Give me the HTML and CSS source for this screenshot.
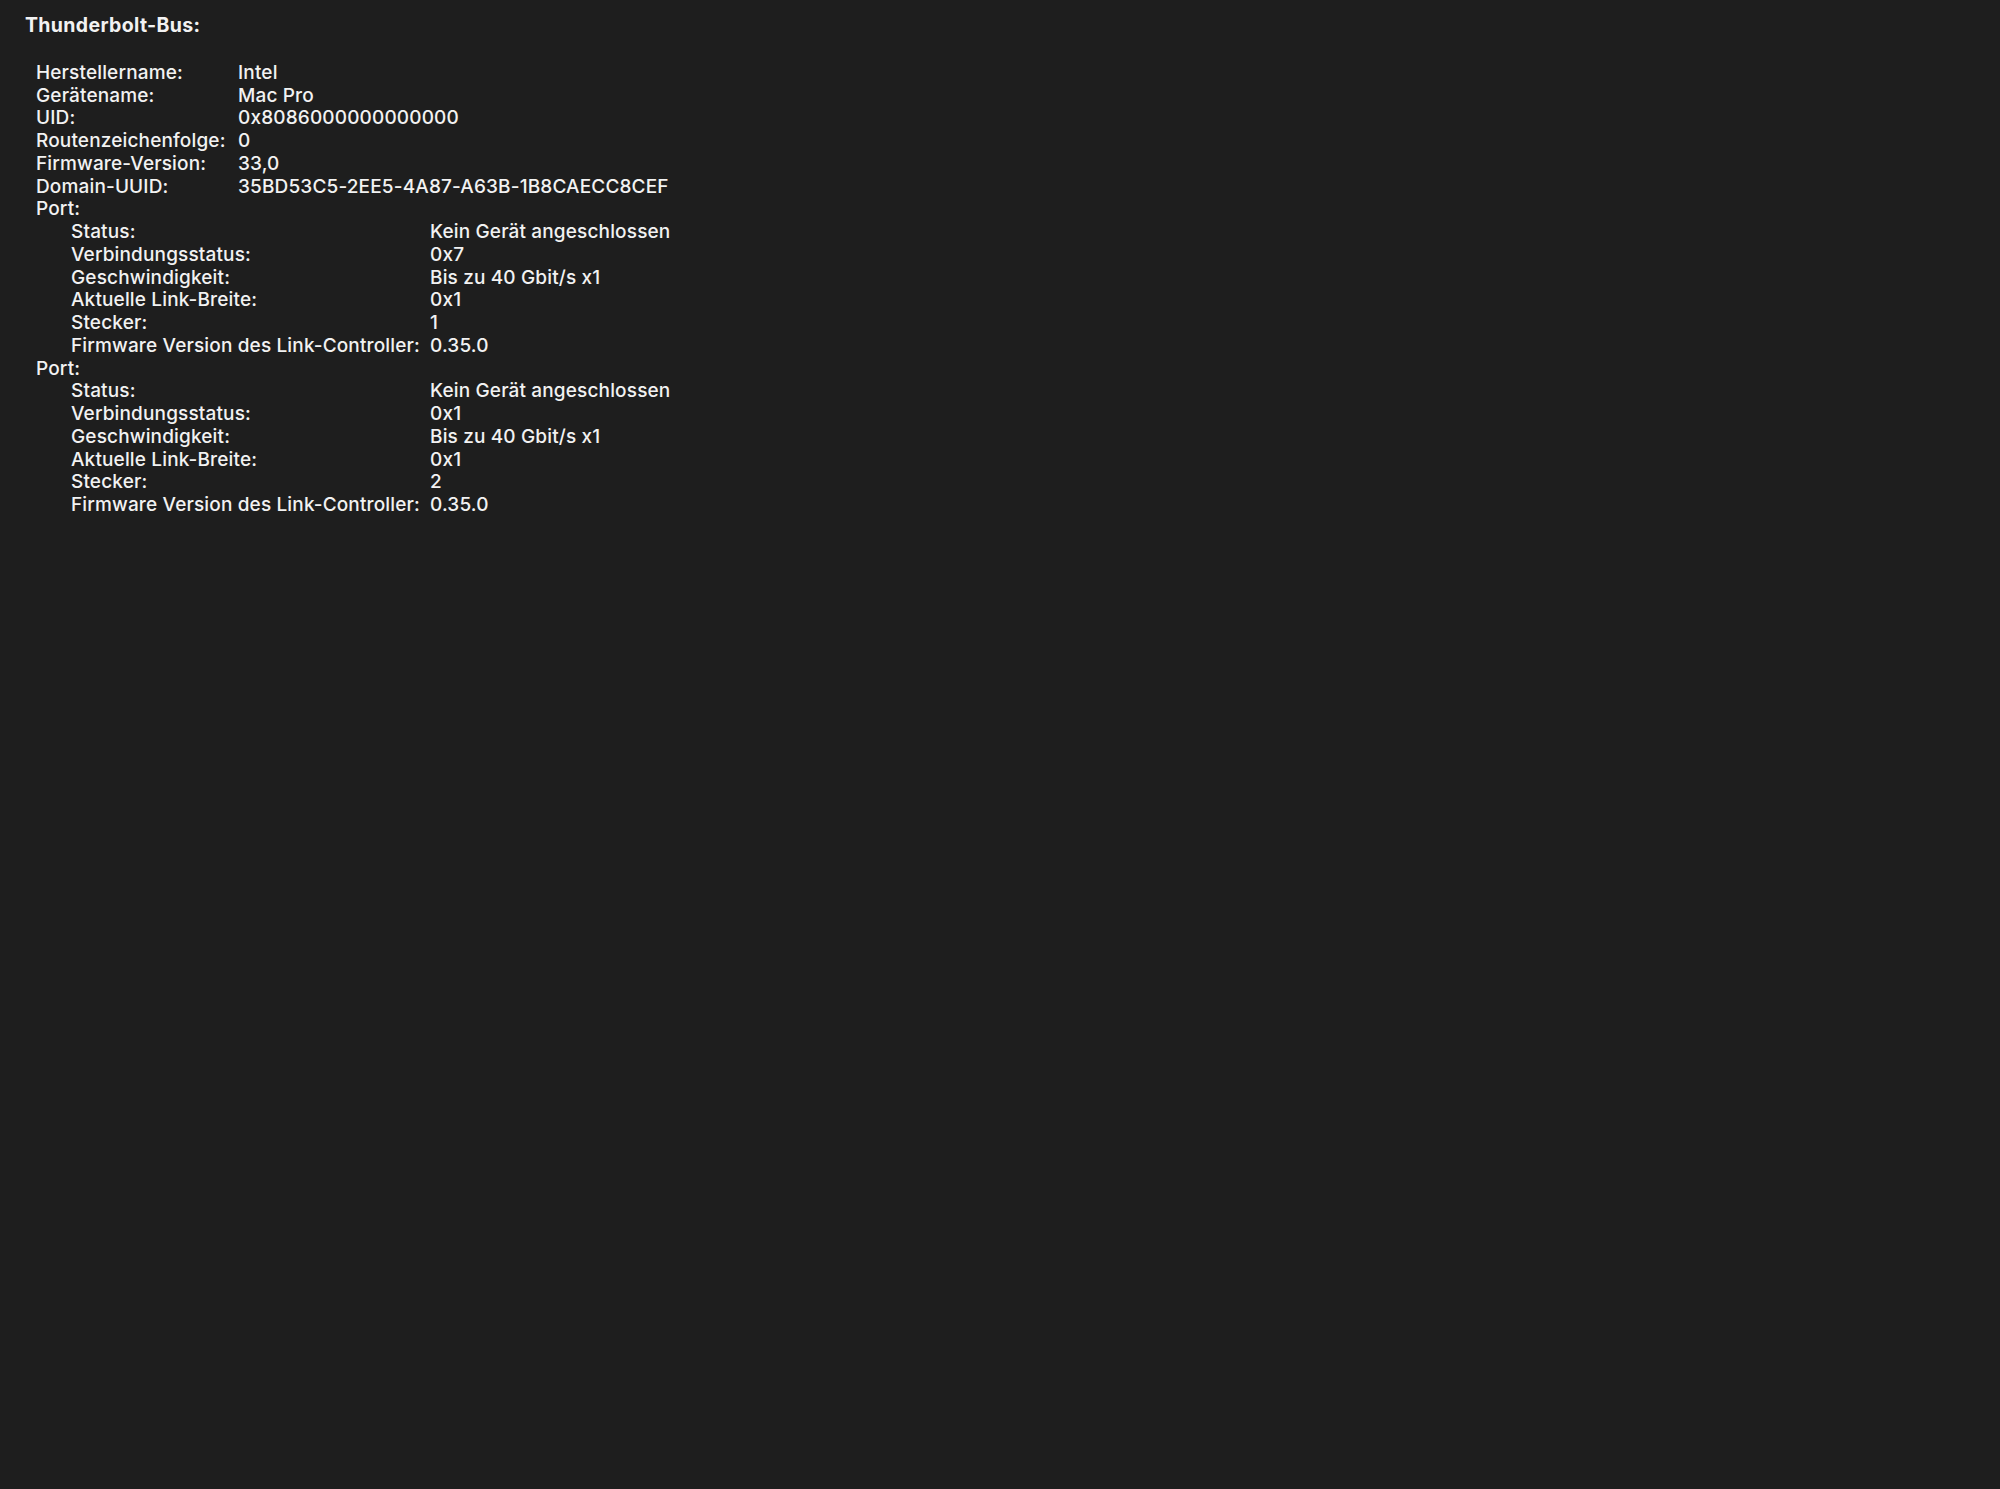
FILE: index.html
```html
<!DOCTYPE html>
<html lang="de">
<head>
    <meta charset="UTF-8">
    <title>Thunderbolt-Bus</title>
    <link rel="stylesheet" href="styles.css">
</head>
<body>
    <div class="report">
        <h1 class="bus-title">Thunderbolt-Bus:</h1>

        <div class="props">
            <div class="label">Herstellername:</div><div class="value">Intel</div>
            <div class="label">Gerätename:</div><div class="value">Mac Pro</div>
            <div class="label">UID:</div><div class="value">0x8086000000000000</div>
            <div class="label">Routenzeichenfolge:</div><div class="value">0</div>
            <div class="label">Firmware-Version:</div><div class="value">33,0</div>
            <div class="label">Domain-UUID:</div><div class="value">35BD53C5-2EE5-4A87-A63B-1B8CAECC8CEF</div>

            <div class="label full">Port:</div>
            <div class="port">
                <div class="label">Status:</div><div class="value">Kein Gerät angeschlossen</div>
                <div class="label">Verbindungsstatus:</div><div class="value">0x7</div>
                <div class="label">Geschwindigkeit:</div><div class="value">Bis zu 40 Gbit/s x1</div>
                <div class="label">Aktuelle Link-Breite:</div><div class="value">0x1</div>
                <div class="label">Stecker:</div><div class="value">1</div>
                <div class="label">Firmware Version des Link-Controller:</div><div class="value">0.35.0</div>
            </div>

            <div class="label full">Port:</div>
            <div class="port">
                <div class="label">Status:</div><div class="value">Kein Gerät angeschlossen</div>
                <div class="label">Verbindungsstatus:</div><div class="value">0x1</div>
                <div class="label">Geschwindigkeit:</div><div class="value">Bis zu 40 Gbit/s x1</div>
                <div class="label">Aktuelle Link-Breite:</div><div class="value">0x1</div>
                <div class="label">Stecker:</div><div class="value">2</div>
                <div class="label">Firmware Version des Link-Controller:</div><div class="value">0.35.0</div>
            </div>
        </div>
    </div>
</body>
</html>
```

FILE: styles.css
```css
* {
    margin: 0;
    padding: 0;
    box-sizing: border-box;
}

html,
body {
    background: #1e1e1e;
    min-height: 100vh;
}

body {
    font-family: 'Inter', 'Liberation Sans', sans-serif;
    font-size: 19px;
    font-weight: 500;
    letter-spacing: 0.15px;
    line-height: 22.75px;
    color: #f2f2f2;
}

.report {
    padding: 14px 0 0 25px;
}

.bus-title {
    font-size: 19.5px;
    font-weight: 700;
    letter-spacing: 0.35px;
    line-height: 22.75px;
    margin-bottom: 25px;
}

.props {
    display: grid;
    grid-template-columns: 202px auto;
    justify-content: start;
    padding-left: 11px;
}

.label,
.value {
    white-space: nowrap;
}

.full {
    grid-column: 1 / -1;
}

/* Ports sind eingerückt und haben eine eigene Spaltenbreite */
.port {
    grid-column: 1 / -1;
    display: grid;
    grid-template-columns: 359px auto;
    justify-content: start;
    padding-left: 35px;
}
```
